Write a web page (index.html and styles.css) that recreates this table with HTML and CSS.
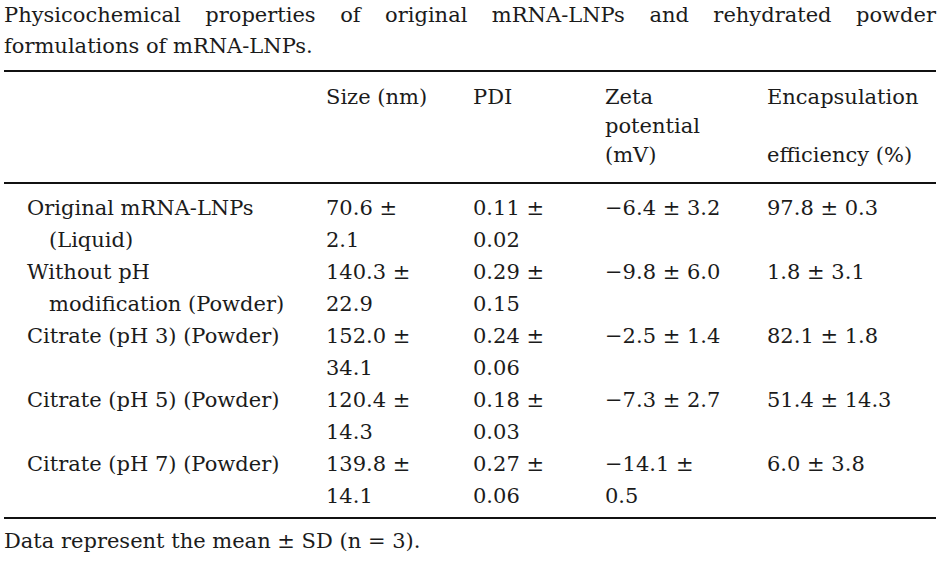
FILE: index.html
```html
<!DOCTYPE html>
<html lang="en">
<head>
<meta charset="utf-8">
<title>Physicochemical properties</title>
<link rel="stylesheet" href="styles.css">
</head>
<body>
<div class="page">
  <p class="caption"><span class="caption-line">Physicochemical properties of original mRNA-LNPs and rehydrated powder</span>formulations of mRNA-LNPs.</p>
  <table class="data">
    <colgroup>
      <col class="c1"><col class="c2"><col class="c3"><col class="c4"><col class="c5">
    </colgroup>
    <thead>
      <tr>
        <th class="label"></th>
        <th>Size (nm)</th>
        <th>PDI</th>
        <th>Zeta<br>potential<br>(mV)</th>
        <th>Encapsulation<br><br>efficiency (%)</th>
      </tr>
    </thead>
    <tbody>
      <tr>
        <td class="label">Original mRNA-LNPs (Liquid)</td>
        <td>70.6 ±<br>2.1</td>
        <td>0.11 ±<br>0.02</td>
        <td>−6.4 ± 3.2</td>
        <td>97.8 ± 0.3</td>
      </tr>
      <tr>
        <td class="label">Without pH modification&nbsp;(Powder)</td>
        <td>140.3 ±<br>22.9</td>
        <td>0.29 ±<br>0.15</td>
        <td>−9.8 ± 6.0</td>
        <td>1.8 ± 3.1</td>
      </tr>
      <tr>
        <td class="label">Citrate (pH 3) (Powder)</td>
        <td>152.0 ±<br>34.1</td>
        <td>0.24 ±<br>0.06</td>
        <td>−2.5 ± 1.4</td>
        <td>82.1 ± 1.8</td>
      </tr>
      <tr>
        <td class="label">Citrate (pH 5) (Powder)</td>
        <td>120.4 ±<br>14.3</td>
        <td>0.18 ±<br>0.03</td>
        <td>−7.3 ± 2.7</td>
        <td>51.4 ± 14.3</td>
      </tr>
      <tr>
        <td class="label">Citrate (pH 7) (Powder)</td>
        <td>139.8 ±<br>14.1</td>
        <td>0.27 ±<br>0.06</td>
        <td>−14.1 ±<br>0.5</td>
        <td>6.0 ± 3.8</td>
      </tr>
    </tbody>
  </table>
  <p class="note">Data represent the mean ± SD (n = 3).</p>
</div>
</body>
</html>
```
FILE: styles.css
```css
html, body {
  margin: 0;
  padding: 0;
  background: #ffffff;
}

body {
  font-family: "DejaVu Serif", "Liberation Serif", serif;
  font-size: 21px;
  color: #1b1b1b;
}

.page {
  width: 932px;
  padding: 0 0 0 4px;
}

.caption {
  margin: 0;
  line-height: 31px;
  text-align: justify;
}

.caption-line {
  display: block;
  text-align: justify;
  text-align-last: justify;
}

.data {
  width: 932px;
  table-layout: fixed;
  border-collapse: collapse;
  margin-top: 8px;
}

.c1 { width: 318px; }
.c2 { width: 147px; }
.c3 { width: 132px; }
.c4 { width: 162px; }
.c5 { width: 173px; }

.data thead tr {
  border-top: 2px solid #111;
  border-bottom: 2px solid #111;
}

.data th {
  font-weight: normal;
  text-align: left;
  vertical-align: top;
  line-height: 29px;
  padding: 11px 0 12px 4px;
  white-space: nowrap;
}

.data td {
  text-align: left;
  vertical-align: top;
  line-height: 32px;
  padding: 0 0 0 4px;
  white-space: nowrap;
}

.data tbody tr:first-child td {
  padding-top: 8px;
}

.data tbody tr:last-child td {
  padding-bottom: 5px;
}

.data tbody tr:last-child {
  border-bottom: 2px solid #111;
}

.data .label {
  padding-left: 45px;
  text-indent: -22px;
  white-space: normal;
}

.note {
  margin: 6px 0 0 0;
  line-height: 32px;
}
```
